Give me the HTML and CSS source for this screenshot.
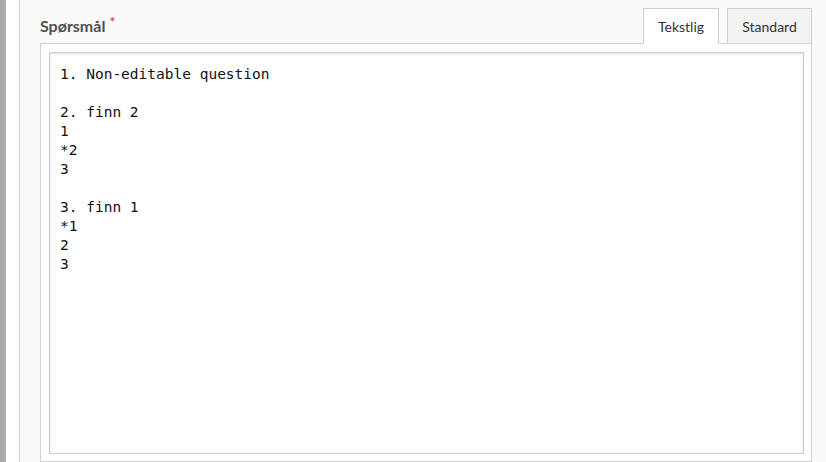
FILE: index.html
```
<!DOCTYPE html>
<html lang="no">
<head>
<meta charset="utf-8">
<link rel="stylesheet" href="styles.css">
</head>
<body>
<div class="page">
  <div class="scrollbar"></div>
  <div class="gutter"></div>
  <div class="panel">
    <div class="field-head">
      <label class="field-label">Spørsmål<span class="req">*</span></label>
      <div class="tabs">
        <div class="tab active">Tekstlig</div>
        <div class="tab">Standard</div>
      </div>
    </div>
    <div class="box">
      <div class="editor">1. Non-editable question

2. finn 2
1
*2
3

3. finn 1
*1
2
3</div>
    </div>
  </div>
</div>
</body>
</html>
```
FILE: styles.css
```
html, body {
  margin: 0;
  padding: 0;
  height: 462px;
  overflow: hidden;
  background: #fafafa;
}
.page {
  display: flex;
  height: 462px;
  font-family: Lato, "Open Sans", sans-serif;
}
.scrollbar {
  width: 6px;
  background: linear-gradient(to right, #a4a4a4, #b0b0b0);
}
.gutter {
  width: 13px;
  background: #ffffff;
}
.panel {
  flex: 1;
  border-left: 1px solid #cfcfcf;
  background: #fafafa;
  padding: 8px 14px 0 20px;
  display: flex;
  flex-direction: column;
}
.field-head {
  display: flex;
  justify-content: space-between;
  align-items: flex-end;
  height: 36px;
  margin-bottom: -1px;
  position: relative;
  z-index: 1;
}
.field-label {
  align-self: flex-start;
  margin-top: 5px;
  font-size: 16px;
  font-weight: 700;
  color: #505050;
}
.req {
  color: #e2533f;
  font-size: 14px;
  vertical-align: 5px;
  margin-left: 4px;
  font-weight: 700;
}
.tabs {
  display: flex;
  gap: 8px;
  height: 36px;
}
.tab {
  box-sizing: border-box;
  height: 36px;
  padding: 0 14px;
  border: 1px solid #cfcfcf;
  background: #f3f3f3;
  font-size: 14px;
  color: #333;
  display: flex;
  align-items: center;
  justify-content: center;
}
.tab.active {
  background: #ffffff;
  border-bottom-color: #ffffff;
  width: 76px;
}
.tab:not(.active) {
  width: 85px;
}
.box {
  border: 1px solid #cfcfcf;
  background: #ffffff;
  padding: 8px 7px 0 8px;
  flex: 1;
}
.editor {
  box-sizing: border-box;
  height: 402px;
  border: 1px solid #cccccc;
  box-shadow: inset 0 1px 3px rgba(0,0,0,0.12);
  background: #fff;
  padding: 12px 10px 10px;
  font-family: "DejaVu Sans Mono", "Liberation Mono", monospace;
  font-size: 14.5px;
  line-height: 19px;
  color: #111;
  white-space: pre;
}
```
